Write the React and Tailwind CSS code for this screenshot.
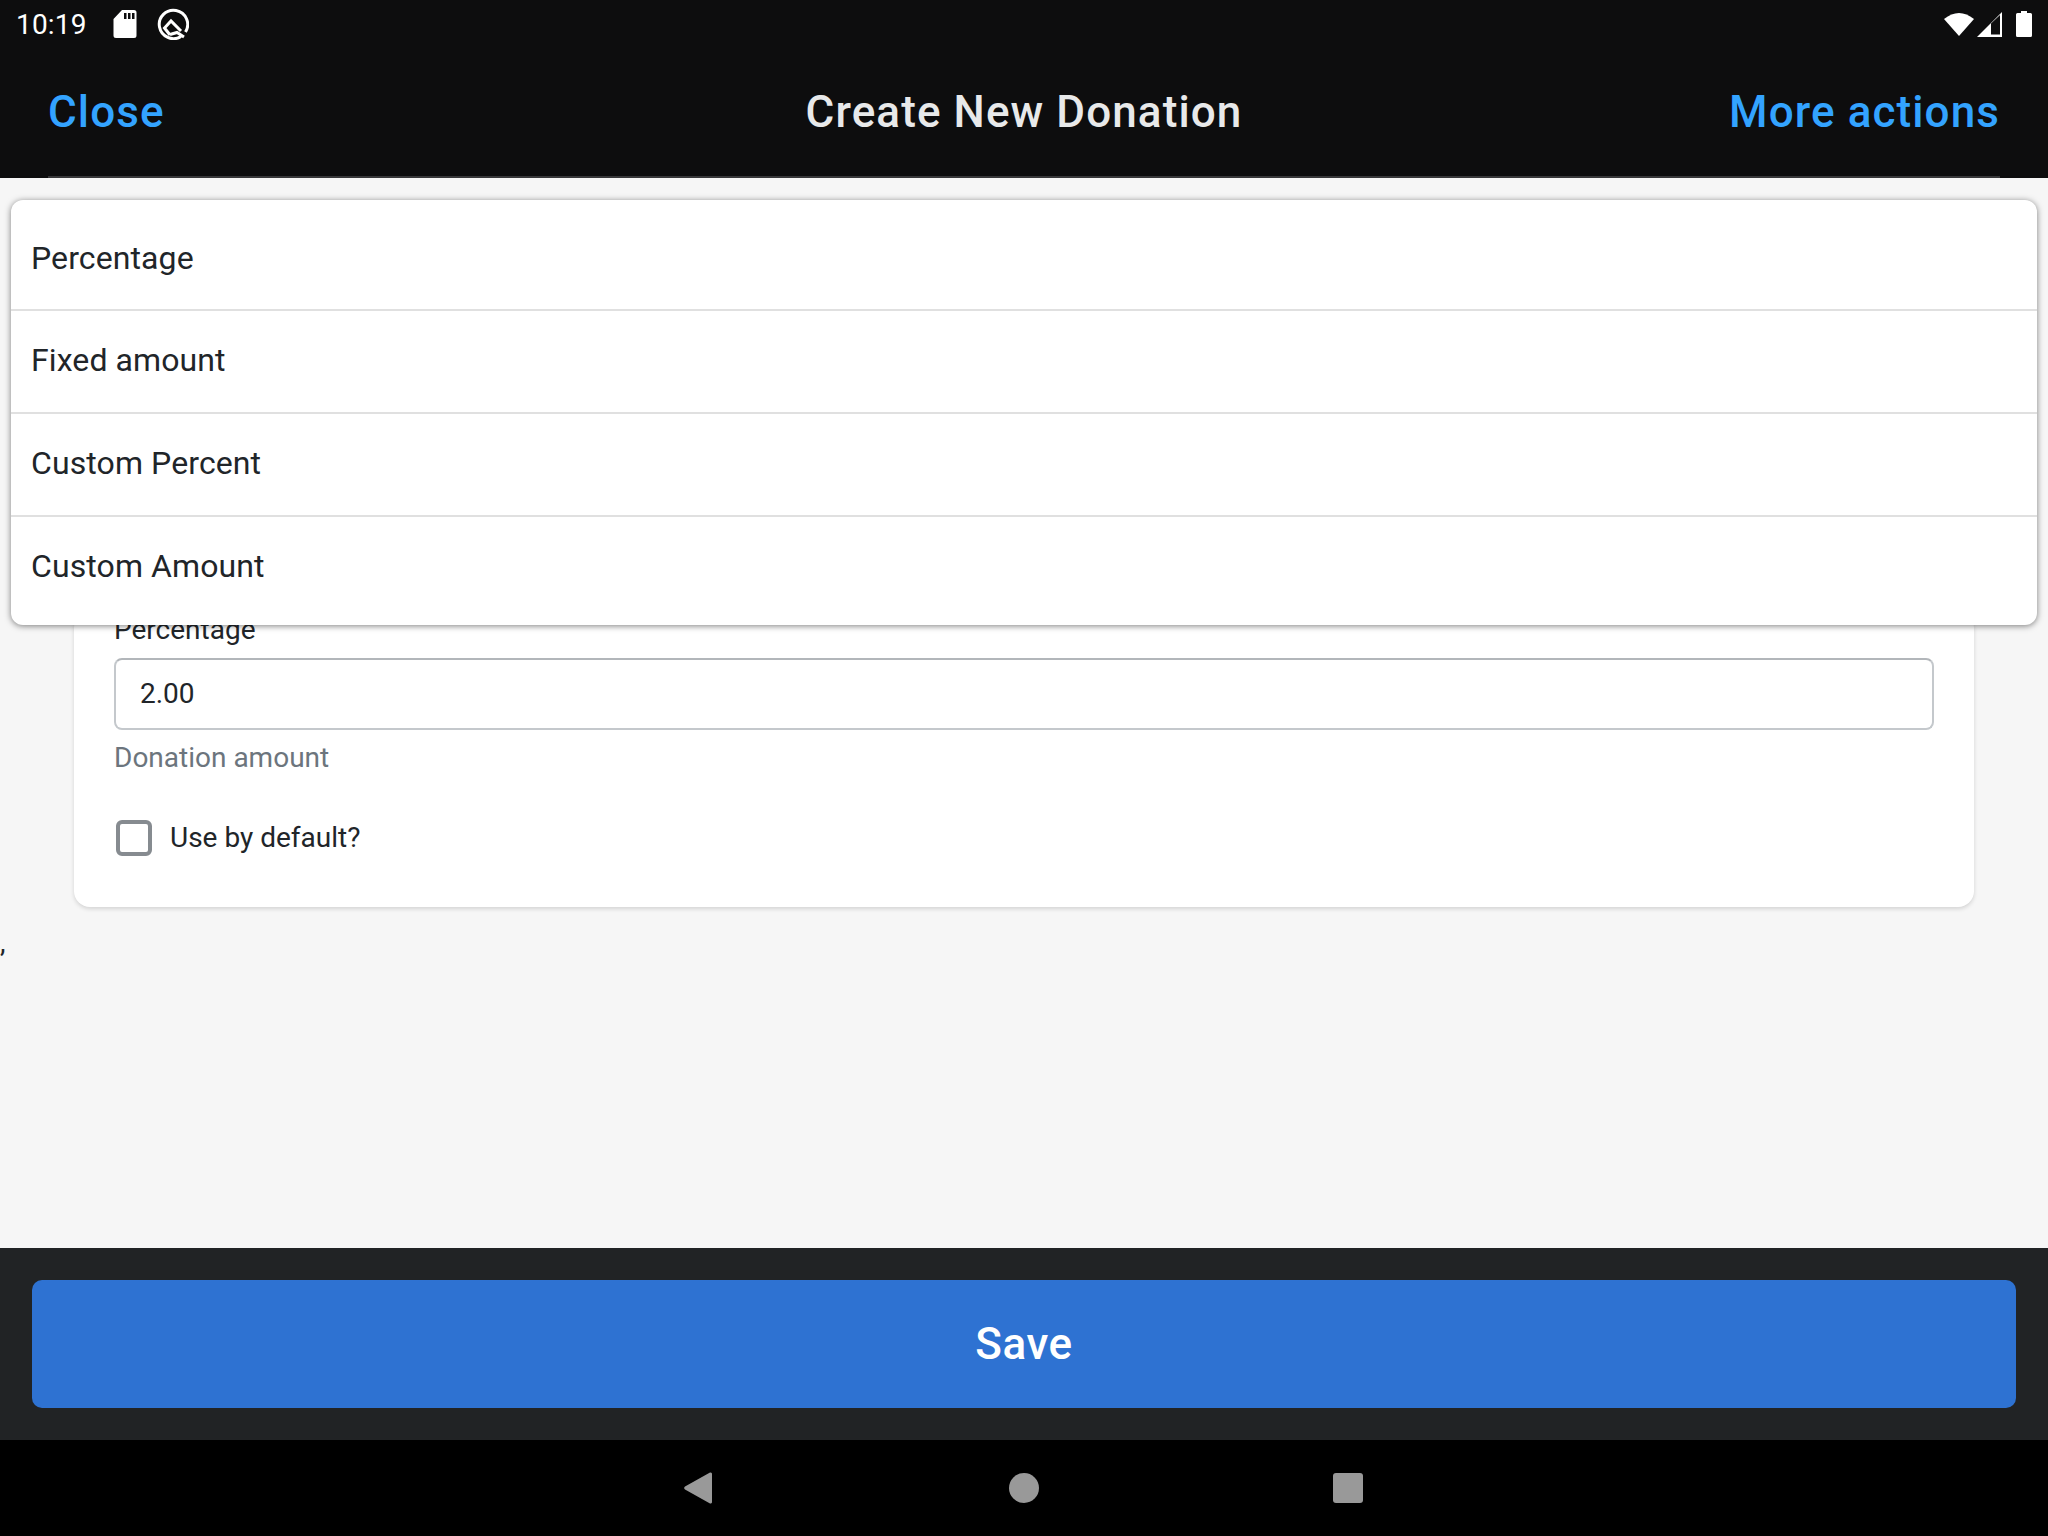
import React from 'react';

const font = { fontFamily: 'Roboto, sans-serif' };

const options = ['Percentage', 'Fixed amount', 'Custom Percent', 'Custom Amount'];

const SdIcon = () => (
  <svg width="24" height="28" viewBox="0 0 24 28" fill="#fff">
    <path d="M9 0h12a2.5 2.5 0 0 1 2.5 2.5v23A2.5 2.5 0 0 1 21 28H3a2.5 2.5 0 0 1-2.5-2.5V9Z" />
    <path d="M11 3h2.500v6H11ZM15 3h2.500v6H15ZM19 3h2.500v6H19Z" fill="#0d0d0e" />
  </svg>
);

const SyncIcon = () => (
  <svg width="32" height="32" viewBox="0 0 32 32" fill="none" stroke="#fff">
    <path d="M24 28.500A14.200 14.200 0 1 1 28.500 24" strokeWidth="3" />
    <path d="M13 27 7.500 20 14 13 24 23" strokeWidth="3" />
    <path d="M13 26.500 20 24.500 27 29" strokeWidth="3" />
  </svg>
);

const WifiIcon = () => (
  <svg width="30" height="24" viewBox="0 0 30 24" fill="#fff">
    <path d="M0 7Q15-5 30 7L15 24Z" />
  </svg>
);

const SignalIcon = () => (
  <svg width="25" height="25" viewBox="0 0 25 25">
    <path d="M0 25 25 0v25Z" fill="#fff" />
    <path d="M14 22.500V11.500L23 3v19.500Z" fill="#0d0d0e" />
  </svg>
);

const BatteryIcon = () => (
  <svg width="16" height="26" viewBox="0 0 16 26" fill="#fff">
    <path d="M5 0h6v2h3.500A1.500 1.500 0 0 1 16 3.500v21a1.500 1.500 0 0 1-1.500 1.500h-13A1.500 1.500 0 0 1 0 24.500v-21A1.500 1.500 0 0 1 1.500 2H5Z" />
  </svg>
);

const App = () => {
  return (
    <div className="flex flex-col w-[2048px] h-[1536px] overflow-hidden bg-[#f6f6f6]" style={font}>
      {/* Status bar and header */}
      <div className="h-[178px] shrink-0 flex flex-col bg-[#0d0d0e]">
        <div className="h-[48px] flex items-center justify-between pl-4 pr-4">
          <div className="flex items-center">
            <span className="mt-[2px] text-[28px] leading-none tracking-[0.2px] text-white">10:19</span>
            <span className="flex ml-[26px]"><SdIcon /></span>
            <span className="flex ml-[20px]"><SyncIcon /></span>
          </div>
          <div className="flex items-center">
            <WifiIcon />
            <span className="ml-[3px] flex"><SignalIcon /></span>
            <span className="ml-[14px] flex"><BatteryIcon /></span>
          </div>
        </div>
        <div className="flex-1 mx-12 grid grid-cols-[1fr_auto_1fr] items-center border-b-2 border-[#38383a] text-[44px] font-medium tracking-[1.1px] leading-none">
          <span className="text-[#33a3ff]">Close</span>
          <span className="text-[#e8e9ea]">Create New Donation</span>
          <span className="text-right text-[#33a3ff]">More actions</span>
        </div>
      </div>

      {/* Form */}
      <div className="flex-1 relative flex flex-col">
        <div className="mt-[434px] mx-[74px] h-[295px] rounded-[16px] bg-white px-[40px] flex flex-col shadow-[0_2px_4px_rgba(0,0,0,0.14)]">
          <label className="h-[36px] text-[28px] leading-[36px] text-[#212529]">Percentage</label>
          <div className="mt-[10px] h-[72px] shrink-0 flex items-center px-[24px] rounded-[8px] border-2 border-[#c4c8cc] border-t-[#b2b6ba] text-[28px] text-[#212529]">2.00</div>
          <div className="mt-[10px] text-[28px] leading-[36px] text-[#6c757d]">Donation amount</div>
          <div className="mt-[43px] flex items-center">
            <span className="w-[36px] h-[36px] ml-[2px] rounded-[6px] border-4 border-[#868b90] bg-white" />
            <span className="ml-[18px] mt-[1px] text-[28px] leading-[36px] text-[#212529]">Use by default?</span>
          </div>
        </div>
        <div className="mt-[22px] text-[28px] leading-none text-[#212529]">,</div>

        {/* Select dropdown */}
        <ul className="absolute left-[11px] top-[22px] w-[2026px] py-2 rounded-[12px] bg-white shadow-[0_1px_6px_rgba(0,0,0,0.5)]">
          {options.map((option, i) => (
            <li
              key={option}
              className={`flex items-center px-[20px] text-[32px] tracking-[0.1px] text-[#212529] ${i === 0 ? 'h-[103px] pb-[1px] border-b-2 border-[#e0e0e0]' : i < options.length - 1 ? 'h-[103px] pb-[3px] border-b-2 border-[#e0e0e0]' : 'h-[100px] pb-[2px]'}`}
            >
              {option}
            </li>
          ))}
        </ul>
      </div>

      {/* Footer */}
      <div className="h-[192px] shrink-0 bg-[#212325] px-8 py-8">
        <button className="w-full h-full rounded-[10px] bg-[#2e72d2] text-white text-[44px] font-medium tracking-[0.6px]">Save</button>
      </div>

      {/* Nav bar */}
      <div className="h-[96px] shrink-0 bg-black flex items-center justify-center pr-[2px]">
        <svg width="28" height="32" viewBox="0 0 28 32" fill="#999">
          <path d="M26 0.500a1.500 1.500 0 0 1 2 1.500v28a1.500 1.500 0 0 1-2 1.500L1 17.500a2 2 0 0 1 0-3Z" />
        </svg>
        <span className="ml-[297px] w-[30px] h-[30px] rounded-full bg-[#999]" />
        <span className="ml-[294px] w-[30px] h-[30px] rounded-[3px] bg-[#999]" />
      </div>
    </div>
  );
};

export default App;
